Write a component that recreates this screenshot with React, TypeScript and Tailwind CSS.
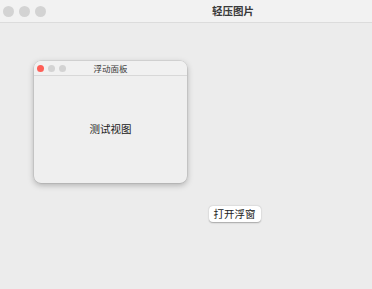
import React from "react";

export default function App() {
  const font = { fontFamily: '"Noto Sans CJK SC", "Noto Sans", sans-serif' };
  return (
    <div className="w-[372px] h-[289px] overflow-hidden bg-[#ececec] relative" style={font}>
      <div className="w-[466px]">
        <div className="h-[23px] bg-[#f2f2f2] border-b border-[#dcdcdc] flex items-center relative">
          <div className="flex items-center gap-[4px] pl-[3px]">
            <span className="w-[11px] h-[11px] rounded-full bg-[#d3d3d3] block" />
            <span className="w-[11px] h-[11px] rounded-full bg-[#d3d3d3] block ml-[1px]" />
            <span className="w-[11px] h-[11px] rounded-full bg-[#d3d3d3] block ml-[1px]" />
          </div>
          <div className="absolute inset-0 flex items-center justify-center text-[10.5px] font-semibold text-[#3a3a3a]">
            轻压图片
          </div>
        </div>
        <div className="flex justify-center pt-[183px] pl-[3px]">
          <button className="h-[16px] w-[52px] bg-white rounded-[4px] shadow-[0_0.5px_1.5px_rgba(0,0,0,0.3)] text-[10.5px] text-[#222] flex items-center justify-center leading-none">
            打开浮窗
          </button>
        </div>
      </div>
      <div className="absolute left-[34px] top-[61px] w-[153px] h-[122px] bg-[#efefef] rounded-[7px] shadow-[0_2px_6px_rgba(0,0,0,0.28),0_0_0_0.5px_rgba(0,0,0,0.12)] flex flex-col overflow-hidden">
        <div className="h-[15px] border-b border-[#d8d8d8] bg-[#f1f1f1] flex items-center relative shrink-0">
          <div className="flex items-center gap-[4px] pl-[3px]">
            <span className="w-[7px] h-[7px] rounded-full bg-[#fe5f57] block" />
            <span className="w-[7px] h-[7px] rounded-full bg-[#d3d3d3] block" />
            <span className="w-[7px] h-[7px] rounded-full bg-[#d3d3d3] block" />
          </div>
          <div className="absolute inset-0 flex items-center justify-center text-[8.5px] text-[#3a3a3a]">
            浮动面板
          </div>
        </div>
        <div className="flex-1 flex items-center justify-center text-[10.5px] text-[#222] pb-[2px]">
          测试视图
        </div>
      </div>
    </div>
  );
}
